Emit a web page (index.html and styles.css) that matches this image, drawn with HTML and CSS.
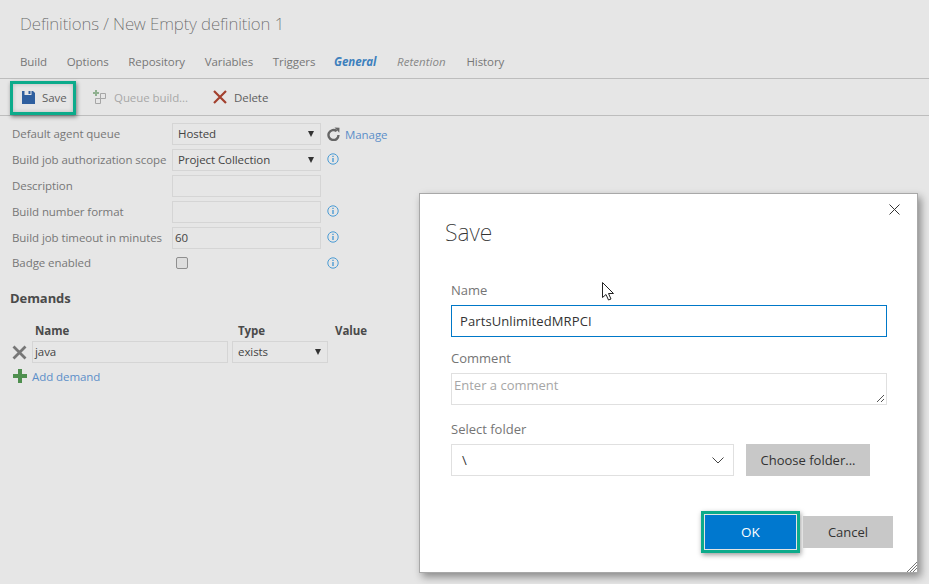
FILE: index.html
```html
<!DOCTYPE html>
<html lang="en">
<head>
<meta charset="utf-8">
<title>Save definition</title>
<link rel="stylesheet" href="styles.css">
</head>
<body>
<main class="page">
  <h1 class="crumbs">Definitions / New Empty definition 1</h1>
  <nav class="tabs">
    <span>Build</span><span>Options</span><span>Repository</span><span>Variables</span><span>Triggers</span>
    <span class="tab-active">General</span><span class="tab-dirty">Retention</span><span>History</span>
  </nav>
  <div class="toolbar">
    <div class="tool tool-save">
      <svg class="ico" width="13" height="13" viewBox="0 0 13 13"><path fill="#2f5f9f" d="M0 0h2.500v4h7V0H11l2 2v11H0z"/><path fill="#2f5f9f" d="M6.500 0h2v3h-2z"/></svg>
      <span>Save</span>
    </div>
    <div class="tool tool-off">
      <svg class="ico" width="15" height="15" viewBox="0 0 15 15"><path fill="#8fb08f" d="M2 0h2v2h2v2H4v2H2V4H0V2h2z"/><path fill="none" stroke="#a6a6a6" d="M7.500 3.500h5v5h-5zM2.500 8.500h5v5h-5z"/></svg>
      <span>Queue build...</span>
    </div>
    <div class="tool tool-del">
      <svg class="ico" width="14" height="14" viewBox="0 0 14 14"><path stroke="#a3402e" stroke-width="2.200" d="M1 1l12 12M13 1L1 13"/></svg>
      <span>Delete</span>
    </div>
  </div>

  <section class="form">
    <label>Default agent queue</label>
    <div class="field select">Hosted<i class="tri"></i></div>
    <div class="after after-manage">
      <svg width="13" height="14" viewBox="0 0 13 14"><path fill="none" stroke="#666" stroke-width="2.400" d="M9.700 4.200A5 5 0 1 0 11.500 8"/><path fill="#666" d="M7.500 0.500l5 .2-.2 5z"/></svg>
      <a class="link">Manage</a>
    </div>
    <label>Build job authorization scope</label>
    <div class="field select">Project Collection<i class="tri"></i></div>
    <div class="after"><svg class="info" width="12" height="12" viewBox="0 0 12 12"><circle cx="6" cy="6" r="5.200" fill="none" stroke="#4a9bd4"/><path fill="#4a9bd4" d="M5.300 5h1.400v4H5.300zM5.300 2.700h1.400v1.400H5.300z"/></svg></div>
    <label>Description</label>
    <div class="field"></div>
    <div class="after"></div>
    <label>Build number format</label>
    <div class="field"></div>
    <div class="after"><svg class="info" width="12" height="12" viewBox="0 0 12 12"><circle cx="6" cy="6" r="5.200" fill="none" stroke="#4a9bd4"/><path fill="#4a9bd4" d="M5.300 5h1.400v4H5.300zM5.300 2.700h1.400v1.400H5.300z"/></svg></div>
    <label>Build job timeout in minutes</label>
    <div class="field field-num">60</div>
    <div class="after"><svg class="info" width="12" height="12" viewBox="0 0 12 12"><circle cx="6" cy="6" r="5.200" fill="none" stroke="#4a9bd4"/><path fill="#4a9bd4" d="M5.300 5h1.400v4H5.300zM5.300 2.700h1.400v1.400H5.300z"/></svg></div>
    <label class="label-badge">Badge enabled</label>
    <div class="check-cell"><span class="check"></span></div>
    <div class="after"><svg class="info" width="12" height="12" viewBox="0 0 12 12"><circle cx="6" cy="6" r="5.200" fill="none" stroke="#4a9bd4"/><path fill="#4a9bd4" d="M5.300 5h1.400v4H5.300zM5.300 2.700h1.400v1.400H5.300z"/></svg></div>
  </section>

  <section class="demands">
    <h2>Demands</h2>
    <div class="d-grid">
      <span></span><b>Name</b><b>Type</b><b>Value</b>
      <svg class="d-x" width="15" height="15" viewBox="0 0 15 15"><path stroke="#777" stroke-width="2.800" d="M1.500 1.500l12 12M13.500 1.500l-12 12"/></svg>
      <div class="field field-d">java</div>
      <div class="field select field-t">exists<i class="tri"></i></div>
      <span></span>
    </div>
    <div class="add">
      <svg width="14" height="14" viewBox="0 0 14 14"><path fill="#4f8f4f" d="M5 0h4v5h5v4H9v5H5V9H0V5h5z"/></svg>
      <a class="link">Add demand</a>
    </div>
  </section>
</main>

<div class="dialog" role="dialog">
  <svg class="close" width="11" height="11" viewBox="0 0 11 11"><path stroke="#333" stroke-width="1" d="M.5.500l10 10M10.500.500l-10 10"/></svg>
  <h2 class="d-title">Save</h2>
  <div class="d-label d-first">Name</div>
  <div class="d-input d-focus">PartsUnlimitedMRPCI</div>
  <div class="d-label d-comment">Comment</div>
  <div class="d-area">Enter a comment
    <svg class="grip-small" width="9" height="9" viewBox="0 0 9 9"><path stroke="#555" d="M1 8l7-7M5 8l3-3"/></svg>
  </div>
  <div class="d-label d-folder">Select folder</div>
  <div class="d-row">
    <div class="d-select">\
      <svg width="12" height="7" viewBox="0 0 12 7"><path fill="none" stroke="#444" d="M.5.500l5.500 5.500 5.500-5.500"/></svg>
    </div>
    <div class="btn btn-choose">Choose folder...</div>
  </div>
  <div class="d-foot">
    <div class="ok-wrap"><div class="btn btn-ok">OK</div></div>
    <div class="btn btn-cancel">Cancel</div>
  </div>
  <svg class="grip" width="10" height="10" viewBox="0 0 10 10"><path stroke="#777" d="M0 10L10 0M3 10l7-7M6 10l4-4"/></svg>
</div>

<svg class="cursor" width="13" height="20" viewBox="0 0 13 20"><path fill="#fff" stroke="#222" d="M.5.500v15l3.500-3 2.500 5.500 2.500-1-2.500-5.500h5z"/></svg>
</body>
</html>
```

FILE: styles.css
```css
* { box-sizing: border-box; }
html, body { margin: 0; height: 100%; }
body {
  background: #e6e6e6;
  font-family: "Open Sans", "Noto Sans", sans-serif;
  font-size: 11.500px;
  letter-spacing: -0.07px;
  color: #777;
  overflow: hidden;
  width: 929px;
  height: 584px;
  position: relative;
}
.page { display: flex; flex-direction: column; }
.crumbs {
  margin: 12px 0 0 20px;
  height: 24px;
  font-family: "Noto Sans", "Open Sans", sans-serif;
  font-size: 16.900px;
  line-height: 24px;
  font-weight: 200;
  color: #666;
}
.tabs {
  display: flex;
  gap: 19.700px;
  margin: 17px 0 0;
  padding: 0 0 8px 20px;
  height: 26px;
  line-height: 17px;
  border-bottom: 1px solid #bdbdbd;
}
.tab-active { color: #3d80bd; font-weight: 700; font-style: italic; margin-left: -1px; }
.tab-dirty { color: #888; font-style: italic; letter-spacing: .05px; margin-left: 1px; }
.tab-dirty + span { margin-left: 1px; }
.toolbar {
  display: flex;
  align-items: center;
  height: 37px;
  border-bottom: 1px solid #bdbdbd;
  padding-left: 10px;
}
.tool { display: flex; align-items: center; gap: 7px; color: #5f5f5f; }
.tool-save {
  width: 66px;
  height: 34px;
  margin-top: 1px;
  padding-left: 9px;
  gap: 7px;
  border: 3px solid #0cab8b;
  box-shadow: 1px 2px 4px rgba(0,0,0,.45), inset 0 0 4px rgba(0,0,0,.2);
}
.tool-off { margin-left: 17px; gap: 6px; color: #a8a8a8; }
.tool-del { margin-left: 25px; gap: 7px; }
.ico { flex: none; }

.form {
  display: grid;
  grid-template-columns: 160px 149px auto;
  grid-auto-rows: 22px;
  row-gap: 4px;
  padding: 7px 0 0 12px;
  align-items: center;
}
.form label { line-height: 22px; }
.form .label-badge { margin-bottom: 2px; }
.field {
  height: 22px;
  line-height: 20px;
  border: 1px solid #d5d5d5;
  color: #444;
  padding-left: 5px;
  position: relative;
}
.field-num { padding-left: 2px; }
.tri {
  position: absolute;
  right: 6px;
  top: 7px;
  border-style: solid;
  border-width: 6px 3.500px 0;
  border-color: #333 transparent transparent;
}
.after { display: flex; align-items: center; gap: 5px; padding-left: 6px; }
.info { margin-top: -2px; }
.check-cell { display: flex; padding-left: 4px; }
.check {
  width: 12px;
  height: 12px;
  margin-top: -3px;
  border: 1px solid #8f8f8f;
  border-radius: 2px;
  background: #dedede;
}
.link { color: #5c8fc9; }

.demands { padding: 0 0 0 10px; }
.demands h2 {
  margin: 12px 0 0;
  height: 22px;
  font-size: 13px;
  line-height: 22px;
  font-weight: 700;
  color: #4a4a4a;
}
.d-grid {
  display: grid;
  grid-template-columns: 18px 196px 96px auto;
  column-gap: 4px;
  grid-template-rows: 22px 22px;
  align-items: center;
  margin-top: 10px;
  color: #4a4a4a;
}
.d-grid b { font-weight: 700; font-size: 11.500px; padding-left: 3px; color: #4a4a4a; }
.d-grid b:nth-child(3) { padding-left: 6px; }
.d-grid b:nth-child(4) { padding-left: 3px; }
.d-x { margin-left: 2px; }
.field-d { padding-left: 2px; }
.add { display: flex; align-items: center; gap: 5px; margin: 5px 0 0 3px; height: 16px; }

.dialog {
  position: absolute;
  left: 419px;
  top: 193px;
  width: 499px;
  height: 380px;
  background: #fff;
  border: 1px solid #a8a8a8;
  box-shadow: 3px 4px 8px rgba(0,0,0,.4);
  padding: 0 0 0 31px;
  font-size: 13px;
  letter-spacing: 0;
  color: #333;
}
.close { position: absolute; left: 469px; top: 10px; }
.d-title {
  margin: 21px 0 0 -6px;
  height: 34px;
  font-family: "Noto Sans", "Open Sans", sans-serif;
  font-size: 23px;
  line-height: 34px;
  font-weight: 200;
  color: #333;
}
.d-label { height: 18px; line-height: 18px; color: #757575; }
.d-first { margin-top: 32px; }
.d-comment { margin-top: 12px; }
.d-folder { margin-top: 15px; }
.d-input {
  height: 32px;
  line-height: 30px;
  margin-top: 6px;
  border: 1px solid #0078c8;
  padding-left: 8px;
  width: 436px;
  letter-spacing: .1px;
}
.d-area {
  position: relative;
  margin-top: 6px;
  width: 436px;
  height: 32px;
  border: 1px solid #e0e0e0;
  padding-left: 2px;
  line-height: 22px;
  color: #a6a6a6;
}
.grip-small { position: absolute; right: 1px; bottom: 1px; }
.d-row { display: flex; gap: 12px; margin-top: 6px; }
.d-select {
  width: 283px;
  height: 32px;
  line-height: 30px;
  border: 1px solid #e0e0e0;
  padding: 0 9px 0 10px;
  display: flex;
  justify-content: space-between;
  align-items: center;
}
.btn { display: flex; align-items: center; justify-content: center; height: 32px; background: #c8c8c8; color: #333; flex: none; }
.btn-choose { width: 124px; }
.d-foot {
  display: flex;
  align-items: center;
  gap: 3px;
  margin: 35px 0 0 250px;
}
.ok-wrap {
  flex: none;
  width: 99px;
  height: 42px;
  border: 3px solid #0cab8b;
  padding: 1px;
  background: #e4e4e4;
  box-shadow: 1px 2px 5px rgba(0,0,0,.4);
  display: flex;
}
.btn-ok { width: 100%; height: 100%; background: #0078cf; color: #fff; font-size: 13.500px; }
.btn-cancel { width: 90px; }
.grip { position: absolute; right: 0; bottom: 0; }
.cursor { position: absolute; left: 602px; top: 282px; }
```
